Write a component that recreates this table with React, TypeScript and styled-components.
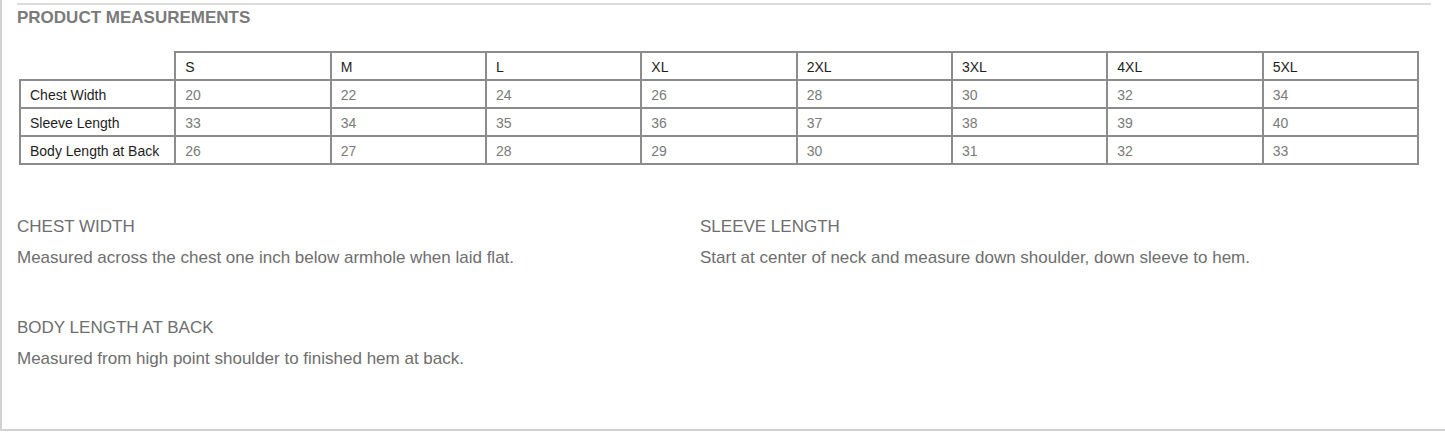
import styled, { createGlobalStyle } from "styled-components";

const GlobalStyle = createGlobalStyle`
  html, body {
    margin: 0;
    padding: 0;
    background: #ffffff;
    font-family: "Liberation Sans", Arial, Helvetica, sans-serif;
  }
`;

const SIZES = ["S", "M", "L", "XL", "2XL", "3XL", "4XL", "5XL"];

const ROWS = [
  { label: "Chest Width", values: [20, 22, 24, 26, 28, 30, 32, 34] },
  { label: "Sleeve Length", values: [33, 34, 35, 36, 37, 38, 39, 40] },
  { label: "Body Length at Back", values: [26, 27, 28, 29, 30, 31, 32, 33] },
];

const NOTES = [
  {
    title: "CHEST WIDTH",
    text: "Measured across the chest one inch below armhole when laid flat.",
  },
  {
    title: "SLEEVE LENGTH",
    text: "Start at center of neck and measure down shoulder, down sleeve to hem.",
  },
  {
    title: "BODY LENGTH AT BACK",
    text: "Measured from high point shoulder to finished hem at back.",
  },
];

export default function App() {
  return (
    <>
      <GlobalStyle />
      <S.Page>
        <S.Rule />
        <S.Title>PRODUCT MEASUREMENTS</S.Title>
        <S.Table>
          <thead>
            <tr>
              <S.Corner />
              {SIZES.map((size) => (
                <S.Cell key={size} $strong>
                  {size}
                </S.Cell>
              ))}
            </tr>
          </thead>
          <tbody>
            {ROWS.map((row) => (
              <tr key={row.label}>
                <S.Cell $strong>{row.label}</S.Cell>
                {row.values.map((value, i) => (
                  <S.Cell key={i}>{value}</S.Cell>
                ))}
              </tr>
            ))}
          </tbody>
        </S.Table>
        <S.Notes>
          {NOTES.map((note) => (
            <S.Note key={note.title}>
              <S.NoteTitle>{note.title}</S.NoteTitle>
              <S.NoteText>{note.text}</S.NoteText>
            </S.Note>
          ))}
        </S.Notes>
      </S.Page>
    </>
  );
}

const S = {
  Page: styled.div`
    box-sizing: border-box;
    height: 431px;
    padding: 3px 14px 0 15px;
    border-left: 2px solid #d2d2d2;
    border-bottom: 2px solid #d2d2d2;
  `,

  Rule: styled.div`
    border-top: 2px solid #dcdcdc;
  `,

  Title: styled.div`
    margin-top: 3px;
    font-size: 17px;
    line-height: 20px;
    font-weight: 700;
    color: #7a7a7a;
  `,

  Table: styled.table`
    margin: 23px 0 0 2px;
    width: 1400px;
    table-layout: fixed;
    border-collapse: collapse;
  `,

  Corner: styled.td`
    border: none;
  `,

  Cell: styled.td<{ $strong?: boolean }>`
    box-sizing: border-box;
    height: 28px;
    padding: 2px 0 0 9px;
    border: 2px solid #8c8c8c;
    font-size: 14px;
    line-height: 16px;
    color: ${({ $strong }) => ($strong ? "#1e1e1e" : "#7a7a7a")};
    text-align: left;
    white-space: nowrap;
  `,

  Notes: styled.div`
    display: grid;
    grid-template-columns: 683px 1fr;
    row-gap: 50px;
    margin-top: 52px;
  `,

  Note: styled.div`
    display: flex;
    flex-direction: column;
    gap: 11px;
  `,

  NoteTitle: styled.div`
    font-size: 17px;
    line-height: 20px;
    color: #6e6e6e;
  `,

  NoteText: styled.div`
    font-size: 17px;
    line-height: 20px;
    color: #6e6e6e;
  `,
};
